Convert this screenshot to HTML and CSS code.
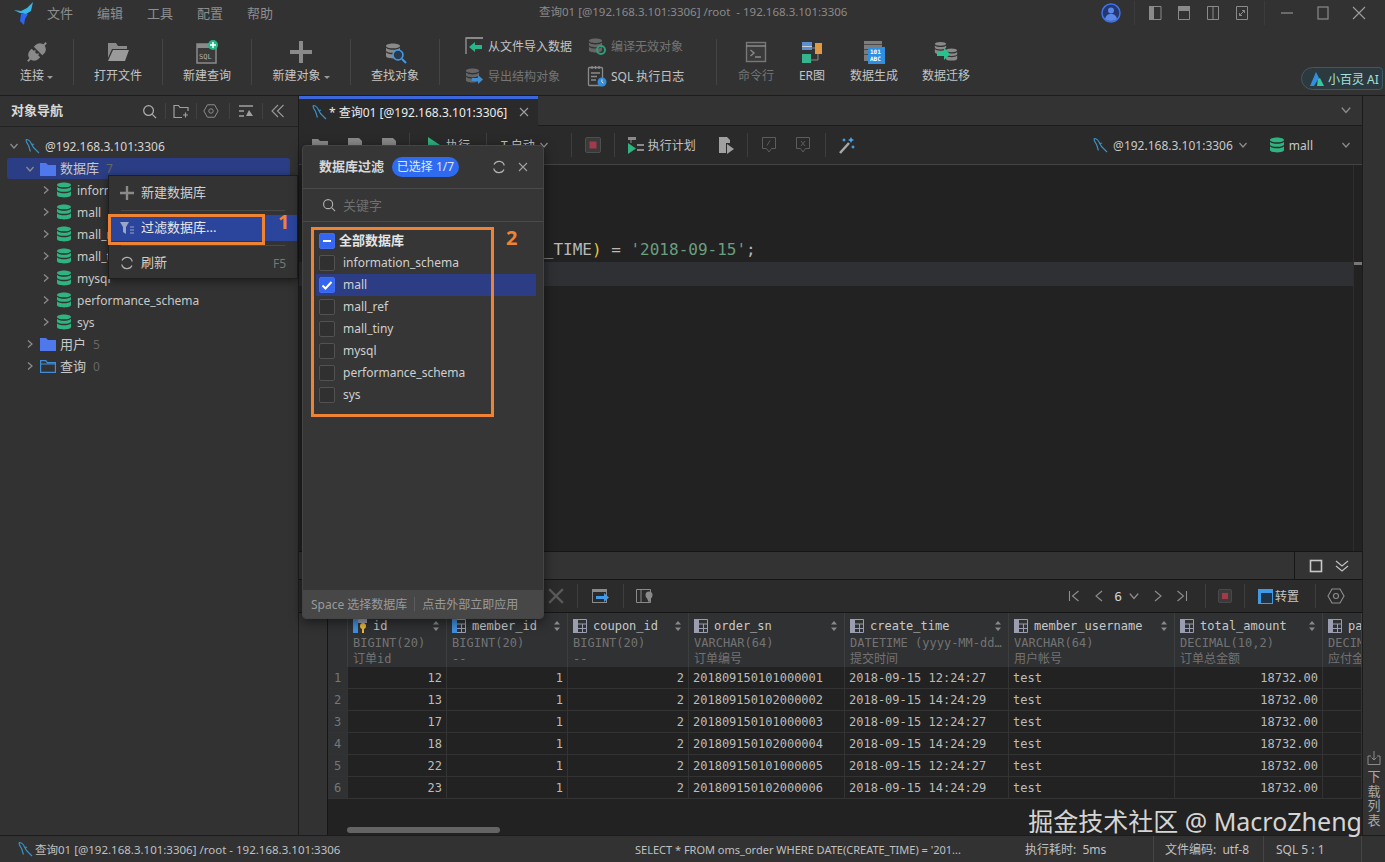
FILE: index.html

```html
<!DOCTYPE html>
<html lang="zh-CN">
<head>
  <meta charset="UTF-8">
  <title>Navicat</title>
  <link rel="stylesheet" href="styles.css">
</head>
<body>

  <!-- shared icons -->
  <svg class="defs">
    <symbol id="db" viewBox="0 0 16 16"><path fill="currentColor" d="M8 .5c3.9 0 7 1 7 2.4S11.900 5.300 8 5.300 1 4.300 1 2.900 4.100.5 8 .5zM1 4.800C2.200 6.200 5 6.800 8 6.800s5.800-.6 7-2v2.600c0 1.400-3.100 2.400-7 2.400S1 8.800 1 7.400zM1 9.300c1.200 1.400 4 2 7 2s5.800-.6 7-2v3.800c0 1.400-3.100 2.400-7 2.400s-7-1-7-2.400z"/></symbol>
    <symbol id="dolphin" viewBox="0 0 16 16"><path fill="none" stroke="#3d8fc4" stroke-width="1.200" d="M1 1.500c3 0 4.500 2 5.500 4.500s3 5 5 6.500l2.500 2.500M1 1.500c0 3 1.500 4 2.500 6s1 4 2 6M6.500 6c1 .3 2 .3 2.500 0"/></symbol>
    <symbol id="folder" viewBox="0 0 16 14"><path fill="#4f78ec" d="M0 1h6l2 2h8v11H0z"/></symbol>
    <symbol id="folder-line" viewBox="0 0 16 14"><path fill="none" stroke="#3f8fd8" stroke-width="1.200" d="M.6 1.600h5.200l1.500 2h8.100v9.800H.6zM.6 5h14.800"/></symbol>
    <symbol id="chev-r" viewBox="0 0 10 10"><path fill="none" stroke="#8e8e8e" stroke-width="1.200" d="M3 1.500 7 5 3 8.500"/></symbol>
    <symbol id="chev-d" viewBox="0 0 10 10"><path fill="none" stroke="#8e8e8e" stroke-width="1.200" d="M1.500 3 5 7l3.500-4"/></symbol>
    <symbol id="close" viewBox="0 0 10 10"><path fill="none" stroke="#a0a0a0" stroke-width="1.100" d="M1 1l8 8M9 1 1 9"/></symbol>
    <symbol id="search" viewBox="0 0 16 16"><circle cx="7" cy="7" r="5.200" fill="none" stroke="#b0b0b0" stroke-width="1.300"/><path stroke="#b0b0b0" stroke-width="1.300" d="m11 11 4 4"/></symbol>
    <symbol id="stop" viewBox="0 0 16 16"><rect x=".5" y=".5" width="15" height="15" rx="1.500" fill="#3a3a3a" stroke="#4e4e4e"/><rect x="4.500" y="4.500" width="7" height="7" fill="#a23a4a"/></symbol>
    <symbol id="hex" viewBox="0 0 18 18"><path fill="none" stroke="#8e8e8e" stroke-width="1.100" d="M5 2h8l4 7-4 7H5L1 9z"/><circle cx="9" cy="9" r="2.500" fill="none" stroke="#8e8e8e" stroke-width="1.100"/></symbol>
    <symbol id="col" viewBox="0 0 14 14"><path fill="#9a9eb0" d="M0 0h5v14H0z"/><path fill="none" stroke="#9a9eb0" d="M5 .5h8.500v13H5M5 5h8.500M9.500 5v8.500M5 9.500h8.500"/></symbol>
    <symbol id="sort" viewBox="0 0 8 10"><path fill="#8a8a8a" d="M4 0l3 3.500H1zM4 10 1 6.500h6z"/></symbol>
    <symbol id="refresh" viewBox="0 0 14 14"><path fill="none" stroke="#b0b0b0" stroke-width="1.200" d="M2 4.500A5.500 5.500 0 0 1 12.300 5.500M12 9.500A5.500 5.500 0 0 1 1.700 8.500"/></symbol>
  </svg>

  <div class="titlebar">
    <svg class="logo" width="22" height="24" viewBox="0 0 22 24"><path fill="#36b6e6" d="M1 9l7 1 6-3 6-6-2 9-5 3-6-1z"/><path fill="#2b66f0" d="M8 13l7 0-3 5-1 6-4-4z"/></svg>
    <nav class="menu"><span>文件</span><span>编辑</span><span>工具</span><span>配置</span><span>帮助</span></nav>
    <div class="win-title">查询01 [@192.168.3.101:3306] /root&nbsp; - 192.168.3.101:3306</div>
    <div class="win-right">
      <svg width="20" height="20" viewBox="0 0 20 20"><circle cx="10" cy="10" r="9" fill="#24386f" stroke="#3f72ea" stroke-width="1.500"/><circle cx="10" cy="7.500" r="3" fill="#5a86e8"/><path fill="#5a86e8" d="M4 16c1-4 3-5 6-5s5 1 6 5c-3 2.500-9 2.500-12 0z"/></svg>
      <i class="vline ml13"></i>
      <svg class="ml10" width="20" height="16" viewBox="0 0 16 16"><path fill="#8a8a8a" d="M2 1h5v14H2z"/><path fill="none" stroke="#8a8a8a" d="M7 1.500h7v13H7"/></svg>
      <svg class="ml9" width="20" height="16" viewBox="0 0 16 16"><path fill="#8a8a8a" d="M2 1h12v5H2z"/><path fill="none" stroke="#8a8a8a" d="M2.500 6v8.500h11V6"/></svg>
      <svg class="ml9" width="20" height="16" viewBox="0 0 16 16"><path fill="none" stroke="#8a8a8a" d="M2.500 1.500h11v13h-11zM8 1.500v13"/></svg>
      <svg class="ml9" width="20" height="16" viewBox="0 0 16 16"><path fill="none" stroke="#8a8a8a" d="M2.500 1.500h11v13h-11zM5.500 10.500l5-5M8 5.500h2.500V8M5.500 8v2.500H8"/></svg>
      <i class="vline ml12"></i>
      <svg class="ml15" width="14" height="14" viewBox="0 0 14 14"><path stroke="#8a8a8a" stroke-width="1.300" d="M1 7h12"/></svg>
      <svg class="ml22" width="14" height="14" viewBox="0 0 14 14"><rect x="2" y="1" width="10" height="12" fill="none" stroke="#8a8a8a" stroke-width="1.200"/></svg>
      <svg class="ml22" width="14" height="14" viewBox="0 0 14 14"><path stroke="#9a9a9a" stroke-width="1.200" d="M1 1l12 12M13 1 1 13"/></svg>
    </div>
  </div>

  <div class="toolbar">
    <div class="tool w73">
      <svg width="24" height="24" viewBox="0 0 24 24"><g transform="rotate(-45 12 12)" fill="#8a8a8a"><path d="M10.500 6H8a6 6 0 0 0 0 12h2.500z"/><path d="M13.500 6H16a6 6 0 0 1 0 12h-2.500z"/><path d="M-1 11h4v2h-4zM21 11h4v2h-4zM9 9h3v1.500H9zM9 13.500h3V15H9z"/></g></svg>
      <span class="tool-label">连接<i class="caret"></i></span>
    </div>
    <i class="tsep"></i>
    <div class="tool w88">
      <svg width="24" height="24" viewBox="0 0 24 24"><path fill="#8a8a8a" d="M2 3h8l2 3h9v3H6l-4 9z"/><path fill="#9a9a9a" d="M7 10h16l-4 11H2z"/></svg>
      <span class="tool-label">打开文件</span>
    </div>
    <i class="tsep"></i>
    <div class="tool w88">
      <svg width="24" height="24" viewBox="0 0 24 24"><rect x="2" y="4" width="19" height="19" fill="#3a3a3a" stroke="#8a8a8a" stroke-width="1.500"/><path fill="#8a8a8a" d="M2 4h19v4H2z"/><text x="4" y="19" class="svg-sql">SQL</text><circle cx="18" cy="5" r="5" fill="#27b58a"/><path stroke="#fff" stroke-width="1.500" d="M18 2v6M15 5h6"/></svg>
      <span class="tool-label">新建查询</span>
    </div>
    <i class="tsep"></i>
    <div class="tool w98">
      <svg width="24" height="24" viewBox="0 0 24 24"><path fill="#8a8a8a" d="M10 1h4v9h9v4h-9v9h-4v-9H1v-4h9z"/></svg>
      <span class="tool-label">新建对象<i class="caret"></i></span>
    </div>
    <i class="tsep"></i>
    <div class="tool w88">
      <svg width="24" height="24" viewBox="0 0 24 24"><use href="#db" x="2" y="1" width="16" height="20" class="c-gray"/><circle cx="15" cy="15" r="5" fill="#2b3a4a" stroke="#3f9ae8" stroke-width="1.600"/><path stroke="#3f9ae8" stroke-width="2" d="m19 19 4 4"/></svg>
      <span class="tool-label">查找对象</span>
    </div>
    <i class="tsep"></i>
    <div class="tool-grid">
      <div class="mini">
        <svg width="20" height="20" viewBox="0 0 20 20"><path fill="none" stroke="#8a8a8a" stroke-width="1.500" d="M2 18V2h16"/><path fill="#8a8a8a" d="M2 1h17v2H2z"/><path fill="#27b58a" d="M5 11l6-5v3h7v4h-7v3z"/></svg>
        <span>从文件导入数据</span>
      </div>
      <div class="mini dim">
        <svg width="20" height="20" viewBox="0 0 20 20"><use href="#db" x="1" y="0" width="15" height="19" class="c-dim"/><circle cx="14" cy="14" r="4" fill="none" stroke="#2f9e78" stroke-width="2"/></svg>
        <span>编译无效对象</span>
      </div>
      <div class="mini dim">
        <svg width="20" height="20" viewBox="0 0 20 20"><use href="#db" x="1" y="0" width="15" height="19" class="c-dim"/><path fill="#3f8ed0" d="M8 12h6V9l5 4.500-5 4.500v-3H8z"/></svg>
        <span>导出结构对象</span>
      </div>
      <div class="mini">
        <svg width="20" height="22" viewBox="0 0 20 22"><rect x="1.500" y="2.500" width="14" height="18" rx="1" fill="none" stroke="#8a8a8a" stroke-width="1.300"/><path stroke="#8a8a8a" stroke-width="1.300" d="M5 1v3M8.500 1v3M12 1v3M4 8h9M4 11.500h6M4 15h5"/><circle cx="15" cy="17" r="4.500" fill="#2f8fe0"/><path stroke="#fff" d="M15 14.500V17l1.500 1"/></svg>
        <span>SQL 执行日志</span>
      </div>
    </div>
    <i class="tsep"></i>
    <div class="tool w78 dim">
      <svg width="24" height="24" viewBox="0 0 24 24"><rect x="2.500" y="2.500" width="19" height="19" fill="#3a3a3a" stroke="#777" stroke-width="1.400"/><path fill="none" stroke="#8a8a8a" stroke-width="1.400" d="M2 6h20M6.500 10l3.500 3-3.500 3M11 17h6"/></svg>
      <span class="tool-label">命令行</span>
    </div>
    <div class="tool w34">
      <svg width="24" height="24" viewBox="0 0 24 24"><path fill="none" stroke="#8a8a8a" d="M9 8h6M18 14v6H10"/><path fill="#5a8fd0" d="M2 2h10v8H2z"/><path fill="#c8cdd6" d="M2 6h10v1H2z"/><path fill="#e09a44" d="M15 3h7v11h-7z"/><path fill="#35b58e" d="M2 14h9v9H2z"/></svg>
      <span class="tool-label">ER图</span>
    </div>
    <div class="tool w90">
      <svg width="24" height="24" viewBox="0 0 24 24"><path fill="#7c7c7c" d="M2 1h18v20H2z"/><path fill="#4a4a4a" d="M2 4h18v1H2zM2 9h18v1H2zM2 14h18v1H2z"/><path fill="#2f8fe0" d="M6 7h17v17H6z"/><text x="8" y="14" class="svg-bits">101</text><text x="8" y="21" class="svg-bits">ABC</text></svg>
      <span class="tool-label">数据生成</span>
    </div>
    <div class="tool w54">
      <svg width="26" height="24" viewBox="0 0 26 24"><use href="#db" x="1" y="0" width="13" height="16" class="c-gray"/><use href="#db" x="12" y="6" width="13" height="17" class="c-gray"/><path fill="#27c28f" d="M4 12h7V8l6 6-6 6v-4H4z"/></svg>
      <span class="tool-label">数据迁移</span>
    </div>
    <div class="ai-btn">
      <svg width="16" height="16" viewBox="0 0 16 16"><path fill="#2f8fe0" d="M7 1l3 6-5 8H1z"/><path fill="#35c6a0" d="M9 8l2-1 4 8H8z"/></svg>
      <span>小百灵 AI</span>
    </div>
  </div>

  <div class="main">
    <aside class="sidebar">
      <div class="side-head">
        <b>对象导航</b>
        <svg class="ml79" width="15" height="15"><use href="#search"/></svg>
        <i class="vline-s ml8"></i>
        <svg class="ml7" width="16" height="15" viewBox="0 0 16 15"><path fill="none" stroke="#a0a0a0" stroke-width="1.200" d="M15 7V3.500H7L5.500 1.500H1v12h8M10 11h5M12.500 8.500v5"/></svg>
        <i class="vline-s ml7"></i>
        <svg class="ml6" width="16" height="16"><use href="#hex" width="16" height="16"/></svg>
        <i class="vline-s ml10"></i>
        <svg class="ml8" width="16" height="14" viewBox="0 0 16 14"><path stroke="#a0a0a0" stroke-width="1.300" d="M1 2h14M1 7h5M1 12h5"/><path fill="#a0a0a0" d="M11 6l4 6H8z"/></svg>
        <i class="vline-s ml8"></i>
        <svg class="ml8" width="14" height="14" viewBox="0 0 14 14"><path fill="none" stroke="#9a9a9a" stroke-width="1.100" d="M7 1 1 7l6 6M12.500 1l-6 6 6 6"/></svg>
      </div>
      <div class="tree">
        <div class="node lvl0"><svg class="chev"><use href="#chev-d"/></svg><svg class="ico-dolphin"><use href="#dolphin"/></svg><span class="name strong">@192.168.3.101:3306</span></div>
        <div class="node lvl1 selected"><svg class="chev"><use href="#chev-d"/></svg><svg class="ico-folder"><use href="#folder"/></svg><span class="name zh">数据库</span><span class="count">7</span></div>
        <div class="node lvl2"><svg class="chev"><use href="#chev-r"/></svg><svg class="ico-db"><use href="#db"/></svg><span class="name">information_schema</span></div>
        <div class="node lvl2"><svg class="chev"><use href="#chev-r"/></svg><svg class="ico-db"><use href="#db"/></svg><span class="name">mall</span></div>
        <div class="node lvl2"><svg class="chev"><use href="#chev-r"/></svg><svg class="ico-db"><use href="#db"/></svg><span class="name">mall_ref</span></div>
        <div class="node lvl2"><svg class="chev"><use href="#chev-r"/></svg><svg class="ico-db"><use href="#db"/></svg><span class="name">mall_tiny</span></div>
        <div class="node lvl2"><svg class="chev"><use href="#chev-r"/></svg><svg class="ico-db"><use href="#db"/></svg><span class="name">mysql</span></div>
        <div class="node lvl2"><svg class="chev"><use href="#chev-r"/></svg><svg class="ico-db"><use href="#db"/></svg><span class="name">performance_schema</span></div>
        <div class="node lvl2"><svg class="chev"><use href="#chev-r"/></svg><svg class="ico-db"><use href="#db"/></svg><span class="name">sys</span></div>
        <div class="node lvl1"><svg class="chev"><use href="#chev-r"/></svg><svg class="ico-folder"><use href="#folder"/></svg><span class="name zh">用户</span><span class="count">5</span></div>
        <div class="node lvl1"><svg class="chev"><use href="#chev-r"/></svg><svg class="ico-folder"><use href="#folder-line"/></svg><span class="name zh">查询</span><span class="count">0</span></div>
      </div>
    </aside>

    <section class="content">
      <div class="tabs">
        <div class="tab">
          <svg class="ico-dolphin"><use href="#dolphin"/></svg>
          <span>* 查询01 [@192.168.3.101:3306]</span>
          <svg class="tab-x"><use href="#close"/></svg>
        </div>
        <svg class="tabs-more"><use href="#chev-d" width="12" height="12"/></svg>
      </div>

      <div class="qbar">
        <svg class="ml13" width="16" height="14" viewBox="0 0 16 14"><path fill="#8a8a8a" d="M0 1h6l2 2h8v11H0z"/></svg>
        <svg class="ml19" width="16" height="16" viewBox="0 0 16 16"><path fill="#8a8a8a" d="M1 1h11l3 3v11H1z"/></svg>
        <svg class="ml18" width="16" height="16" viewBox="0 0 16 16"><path fill="#8a8a8a" d="M1 1h11l3 3v11H1z"/></svg>
        <i class="qsep ml12"></i>
        <svg class="ml18" width="12" height="16" viewBox="0 0 12 16"><path fill="#2fb380" d="M0 0l12 8-12 8z"/></svg>
        <span class="qtext ml6">执行</span>
        <i class="qsep ml16"></i>
        <span class="qtext ml14">T 自动</span>
        <svg class="ml4" width="10" height="10"><use href="#chev-d"/></svg>
        <i class="qsep ml22"></i>
        <svg class="ml13" width="16" height="16"><use href="#stop"/></svg>
        <i class="qsep ml13"></i>
        <svg class="ml12" width="18" height="18" viewBox="0 0 18 18"><path fill="#8a8a8a" d="M1 1h8v3H1zM10 8h7v2h-7zM10 13h7v2h-7z"/><path stroke="#8a8a8a" d="M4 4v3"/><path fill="#2fb380" d="M1 7l8 5.500L1 18z"/></svg>
        <span class="qtext ml3">执行计划</span>
        <svg class="ml22" width="16" height="18" viewBox="0 0 16 18"><path fill="#a0a0a0" d="M1 1h8l3 3v3l3 0v0H8v10H1z"/><path fill="#a0a0a0" d="M9 8l7 5-7 5z"/></svg>
        <i class="qsep ml13"></i>
        <svg class="ml13" width="16" height="18" viewBox="0 0 16 18"><path fill="none" stroke="#5c5c5c" d="M1.500 1.500h13v11h-4L8 16l-2.500-3.500h-4zM6 9.500l3-5"/></svg>
        <svg class="ml18" width="16" height="18" viewBox="0 0 16 18"><path fill="none" stroke="#5c5c5c" d="M1.500 1.500h13v11h-4L8 16l-2.500-3.500h-4zM6 5l4 5M10 5l-4 5"/></svg>
        <i class="qsep ml14"></i>
        <svg class="ml12" width="18" height="18" viewBox="0 0 18 18"><path stroke="#a8a8a8" stroke-width="2.500" d="M2 17l9-10"/><path fill="#4aa8ee" d="M13 1l1 2 2 1-2 1-1 2-1-2-2-1 2-1zM6 2l.7 1.300L8 4l-1.300.7L6 6l-.7-1.300L4 4l1.300-.7zM15 9l.7 1.300L17 11l-1.300.7L15 13l-.7-1.300L13 11l1.300-.7z"/></svg>
        <div class="qright">
          <svg class="ico-dolphin"><use href="#dolphin"/></svg>
          <span class="qconn">@192.168.3.101:3306</span>
          <svg width="10" height="10"><use href="#chev-d"/></svg>
          <svg class="ico-db ml21"><use href="#db"/></svg>
          <span class="qconn ml9">mall</span>
          <svg class="ml23" width="10" height="10"><use href="#chev-d"/></svg>
        </div>
      </div>

      <div class="editor">
        <pre class="code"><span class="line">SELECT *</span><span class="line">FROM</span><span class="line">oms_order</span><span class="line">WHERE DATE(CREATE_TIME<span class="paren">)</span> = <span class="str">'2018-09-15'</span>;</span><span class="line current"></span></pre>
        <div class="ruler"><i class="ruler-mark"></i></div>
      </div>

      <div class="panel-tabs">
        <div class="panel-btns">
          <svg width="14" height="14" viewBox="0 0 14 14"><rect x="1.500" y="1.500" width="11" height="11" fill="none" stroke="#c8c8c8" stroke-width="1.600"/></svg>
          <svg class="ml12" width="14" height="14" viewBox="0 0 14 14"><path fill="none" stroke="#c0c0c0" stroke-width="1.200" d="M1 2l6 5 6-5M1 7l6 5 6-5"/></svg>
        </div>
      </div>

      <div class="rbar">
        <svg class="ml249" width="16" height="16" viewBox="0 0 14 14"><path stroke="#5a5a5a" stroke-width="2" d="M1 1l12 12M13 1 1 13"/></svg>
        <i class="qsep ml13"></i>
        <svg class="ml14" width="18" height="16" viewBox="0 0 18 16"><rect x=".5" y="1.500" width="14" height="13" fill="none" stroke="#8a8a8a"/><path fill="#8a8a8a" d="M0 1h15v3H0z"/><path fill="#3f9ae8" d="M4 8h8V5l5 4.500-5 4.500v-3H4z"/></svg>
        <i class="qsep ml13"></i>
        <svg class="ml12" width="18" height="16" viewBox="0 0 18 16"><path fill="none" stroke="#8a8a8a" d="M.5 1.500h14v13H.5zM5 1.500v13"/><circle cx="13" cy="7" r="3.500" fill="#8a8a8a"/><path fill="#8a8a8a" d="M10 8l3 7 3-7z"/></svg>
        <div class="rright">
          <svg width="12" height="12" viewBox="0 0 12 12"><path fill="none" stroke="#8e8e8e" stroke-width="1.100" d="M1.500 1v10M10.500 1l-6 5 6 5"/></svg>
          <svg class="ml13" width="12" height="12" viewBox="0 0 12 12"><path fill="none" stroke="#8e8e8e" stroke-width="1.100" d="M9 1 3 6l6 5"/></svg>
          <span class="pagenum">6</span>
          <svg class="ml6" width="12" height="12"><use href="#chev-d" width="12" height="12"/></svg>
          <svg class="ml12" width="12" height="12" viewBox="0 0 12 12"><path fill="none" stroke="#8e8e8e" stroke-width="1.100" d="M3 1l6 5-6 5"/></svg>
          <svg class="ml12" width="12" height="12" viewBox="0 0 12 12"><path fill="none" stroke="#8e8e8e" stroke-width="1.100" d="M1.500 1l6 5-6 5M10.500 1v10"/></svg>
          <i class="qsep ml17"></i>
          <svg class="ml12" width="14" height="14"><use href="#stop" width="14" height="14"/></svg>
          <i class="qsep ml12"></i>
          <svg class="ml13" width="15" height="15" viewBox="0 0 15 15"><path fill="#3f9ae8" d="M0 0h15v15H0z"/><path fill="#1f3346" d="M3 4h11v10H3z"/></svg>
          <span class="qtext ml2">转置</span>
          <i class="qsep ml16"></i>
          <svg class="ml11" width="18" height="18"><use href="#hex"/></svg>
        </div>
      </div>

      <div class="results">
        <table class="grid">
          <colgroup><col class="c0"><col class="c1"><col class="c2"><col class="c2"><col class="c3"><col class="c4"><col class="c5"><col class="c6"><col class="c7"></colgroup>
          <thead>
            <tr>
              <th></th>
              <th><div class="h1"><svg class="key" width="14" height="14" viewBox="0 0 14 14"><path fill="#3f8fe0" d="M0 0h5v14H0z"/><path fill="#9a9eb0" d="M5 0h9v4H5z"/><circle cx="10" cy="7" r="3" fill="#e8b93a"/><path stroke="#e8b93a" stroke-width="2" d="M10 9v5"/></svg><span>id</span><svg class="sort"><use href="#sort"/></svg></div><div class="h2">BIGINT(20)</div><div class="h3">订单id</div></th>
              <th><div class="h1"><svg class="key" width="14" height="14" viewBox="0 0 14 14"><use href="#col"/><path fill="#3f8fe0" d="M0 0h5v14H0z"/></svg><span>member_id</span><svg class="sort"><use href="#sort"/></svg></div><div class="h2">BIGINT(20)</div><div class="h3">--</div></th>
              <th><div class="h1"><svg class="key"><use href="#col"/></svg><span>coupon_id</span><svg class="sort"><use href="#sort"/></svg></div><div class="h2">BIGINT(20)</div><div class="h3">--</div></th>
              <th><div class="h1"><svg class="key"><use href="#col"/></svg><span>order_sn</span><svg class="sort"><use href="#sort"/></svg></div><div class="h2">VARCHAR(64)</div><div class="h3">订单编号</div></th>
              <th><div class="h1"><svg class="key"><use href="#col"/></svg><span>create_time</span><svg class="sort"><use href="#sort"/></svg></div><div class="h2">DATETIME (yyyy-MM-dd…</div><div class="h3">提交时间</div></th>
              <th><div class="h1"><svg class="key"><use href="#col"/></svg><span>member_username</span><svg class="sort"><use href="#sort"/></svg></div><div class="h2">VARCHAR(64)</div><div class="h3">用户帐号</div></th>
              <th><div class="h1"><svg class="key"><use href="#col"/></svg><span>total_amount</span><svg class="sort"><use href="#sort"/></svg></div><div class="h2">DECIMAL(10,2)</div><div class="h3">订单总金额</div></th>
              <th><div class="h1"><svg class="key"><use href="#col"/></svg><span>pay_amount</span></div><div class="h2">DECIMAL(10,2)</div><div class="h3">应付金额</div></th>
            </tr>
          </thead>
          <tbody>
            <tr><td class="num">1</td><td class="r">12</td><td class="r">1</td><td class="r">2</td><td>201809150101000001</td><td>2018-09-15 12:24:27</td><td>test</td><td class="r">18732.00</td><td></td></tr>
            <tr><td class="num">2</td><td class="r">13</td><td class="r">1</td><td class="r">2</td><td>201809150102000002</td><td>2018-09-15 14:24:29</td><td>test</td><td class="r">18732.00</td><td></td></tr>
            <tr><td class="num">3</td><td class="r">17</td><td class="r">1</td><td class="r">2</td><td>201809150101000003</td><td>2018-09-15 12:24:27</td><td>test</td><td class="r">18732.00</td><td></td></tr>
            <tr><td class="num">4</td><td class="r">18</td><td class="r">1</td><td class="r">2</td><td>201809150102000004</td><td>2018-09-15 14:24:29</td><td>test</td><td class="r">18732.00</td><td></td></tr>
            <tr><td class="num">5</td><td class="r">22</td><td class="r">1</td><td class="r">2</td><td>201809150101000005</td><td>2018-09-15 12:24:27</td><td>test</td><td class="r">18732.00</td><td></td></tr>
            <tr><td class="num">6</td><td class="r">23</td><td class="r">1</td><td class="r">2</td><td>201809150102000006</td><td>2018-09-15 14:24:29</td><td>test</td><td class="r">18732.00</td><td></td></tr>
          </tbody>
        </table>
        <div class="hscroll"><i class="thumb"></i></div>
      </div>
    </section>

    <aside class="rail">
      <svg width="14" height="16" viewBox="0 0 14 16"><path fill="none" stroke="#8a8a8a" d="M4 6H1v8.500h12V6h-3M7 1v9M4.500 7.500 7 10l2.500-2.500"/></svg>
      <div class="rail-text">下载列表</div>
    </aside>
  </div>

  <div class="status">
    <svg class="ico-dolphin ml18"><use href="#dolphin"/></svg>
    <span class="st-conn">查询01 [@192.168.3.101:3306] /root - 192.168.3.101:3306</span>
    <span class="st-sql">SELECT * FROM oms_order WHERE DATE(CREATE_TIME) = '201...</span>
    <span class="st-time">执行耗时:&nbsp; 5ms</span>
    <i class="st-sep"></i>
    <span class="st-enc">文件编码:&nbsp; utf-8</span>
    <i class="st-sep"></i>
    <span class="st-pos">SQL 5 : 1</span>
    <i class="st-sep st-last"></i>
  </div>

  <!-- floating layers -->
  <div class="ctx-menu">
    <div class="ctx-item"><svg width="14" height="14" viewBox="0 0 14 14"><path fill="#8a8a8a" d="M5.800 0h2.400v5.800H14v2.400H8.200V14H5.800V8.200H0V5.800h5.800z"/></svg><span>新建数据库</span></div>
    <i class="ctx-sep"></i>
    <div class="ctx-item active"><svg width="14" height="14" viewBox="0 0 14 14"><path fill="#9aa6c8" d="M0 1h9L6 6v7L3 11V6z"/><path stroke="#9aa6c8" d="M10 6h4M10 9h4M10 12h4"/></svg><span>过滤数据库...</span></div>
    <i class="ctx-sep"></i>
    <div class="ctx-item"><svg width="14" height="14"><use href="#refresh"/></svg><span>刷新</span><em>F5</em></div>
  </div>
  <div class="mark mark-menu"></div>
  <div class="mark-num num-1">1</div>

  <div class="filter">
    <div class="filter-head">
      <b>数据库过滤</b>
      <span class="badge">已选择 1/7</span>
      <svg class="filter-refresh" width="14" height="14"><use href="#refresh"/></svg>
      <svg class="filter-close" width="10" height="10"><use href="#close"/></svg>
    </div>
    <div class="filter-search"><svg width="14" height="14"><use href="#search" width="14" height="14"/></svg><span>关键字</span></div>
    <div class="filter-list">
      <div class="opt all"><i class="box on"><i class="dash"></i></i><b>全部数据库</b></div>
      <div class="opt"><i class="box"></i><span>information_schema</span></div>
      <div class="opt sel"><i class="box on"><svg width="12" height="12" viewBox="0 0 12 12"><path fill="none" stroke="#fff" stroke-width="2" d="M1.500 6.500 4.500 9.500 10.500 3"/></svg></i><span>mall</span></div>
      <div class="opt"><i class="box"></i><span>mall_ref</span></div>
      <div class="opt"><i class="box"></i><span>mall_tiny</span></div>
      <div class="opt"><i class="box"></i><span>mysql</span></div>
      <div class="opt"><i class="box"></i><span>performance_schema</span></div>
      <div class="opt"><i class="box"></i><span>sys</span></div>
    </div>
    <div class="filter-foot"><span>Space 选择数据库</span><i></i><span>点击外部立即应用</span></div>
  </div>
  <div class="mark mark-list"></div>
  <div class="mark-num num-2">2</div>

  <div class="watermark">掘金技术社区 @ MacroZheng</div>

</body>
</html>
```

FILE: styles.css

```css
* { box-sizing: border-box; }
html, body { height: 100%; }
body {
  margin: 0;
  height: 862px;
  position: relative;
  overflow: hidden;
  display: flex;
  flex-direction: column;
  background: #323232;
  color: #c8c8c8;
  font: 12px "Noto Sans", "Noto Sans CJK SC", sans-serif;
}
i, em { font-style: normal; }
svg { flex: none; display: block; overflow: visible; }
.defs { position: absolute; width: 0; height: 0; }

/* spacing helpers */
.ml2 { margin-left: 2px; } .ml3 { margin-left: 3px; } .ml4 { margin-left: 4px; }
.ml6 { margin-left: 6px; } .ml7 { margin-left: 7px; } .ml8 { margin-left: 8px; }
.ml9 { margin-left: 9px; } .ml10 { margin-left: 10px; } .ml11 { margin-left: 11px; }
.ml12 { margin-left: 12px; } .ml13 { margin-left: 13px; } .ml14 { margin-left: 14px; }
.ml15 { margin-left: 15px; } .ml16 { margin-left: 16px; } .ml17 { margin-left: 17px; }
.ml18 { margin-left: 18px; } .ml19 { margin-left: 19px; } .ml20 { margin-left: 20px; }
.ml21 { margin-left: 21px; } .ml22 { margin-left: 22px; } .ml23 { margin-left: 23px; }
.ml79 { margin-left: 79px; } .ml249 { margin-left: 249px; }

.c-gray { color: #8a8a8a; }
.c-dim { color: #666; }
.svg-sql { font: 7px "DejaVu Sans Mono", monospace; fill: #b0b0b0; }
.svg-bits { font: bold 6px "DejaVu Sans Mono", monospace; fill: #fff; }

/* title bar */
.titlebar {
  height: 26px;
  flex: none;
  display: flex;
  align-items: center;
  position: relative;
  padding-left: 13px;
}
.menu { display: flex; gap: 24px; margin-left: 12px; padding-bottom: 2px; font-size: 13px; color: #8e8e8e; }
.win-title {
  position: absolute;
  left: 539px;
  top: 3px;
  font-size: 11.500px;
  color: #8a8a8a;
  white-space: nowrap;
}
.win-right { margin-left: auto; display: flex; align-items: center; padding-right: 19px; }
.vline { width: 1px; height: 24px; background: #3c3c3c; }

/* main toolbar */
.toolbar {
  height: 70px;
  flex: none;
  display: flex;
  padding-top: 12px;
  border-bottom: 1px solid #1c1c1c;
  position: relative;
}
.tool {
  display: flex;
  flex-direction: column;
  align-items: center;
  padding-top: 2px;
  gap: 3px;
}
.tool svg { height: 24px; }
.w34 { width: 34px; } .w54 { width: 54px; } .w73 { width: 73px; } .w78 { width: 78px; }
.w88 { width: 88px; } .w90 { width: 90px; } .w98 { width: 98px; }
.tool-label { line-height: 18px; color: #c4c4c4; white-space: nowrap; }
.dim .tool-label, .mini.dim span { color: #757575; }
.caret {
  display: inline-block;
  margin-left: 3px;
  vertical-align: 1px;
  border: 3px solid transparent;
  border-top: 3px solid #999;
  border-bottom: 0;
}
.tsep { width: 1px; height: 46px; margin-top: 1px; background: #444; flex: none; }
.tool-grid {
  width: 276px;
  height: 60px;
  margin-top: -7px;
  padding-left: 24px;
  display: grid;
  grid-template-columns: 123px 129px;
  grid-auto-rows: 30px;
}
.mini { display: flex; align-items: center; gap: 4px; color: #c4c4c4; white-space: nowrap; }
.ai-btn {
  position: absolute;
  right: 2px;
  top: 41px;
  width: 82px;
  height: 23px;
  display: flex;
  align-items: center;
  gap: 3px;
  padding-left: 7px;
  border: 1px solid #3d5a68;
  border-radius: 12px 4px 4px 12px;
  background: #2c3a40;
  color: #a8e0d8;
  white-space: nowrap;
}

/* body split */
.main { flex: 1; display: flex; min-height: 0; }
.sidebar { width: 299px; flex: none; border-right: 1px solid #1c1c1c; }
.side-head {
  height: 31px;
  display: flex;
  align-items: center;
  padding-left: 11px;
  border-bottom: 1px solid #222;
}
.side-head b { font-size: 13px; color: #d8d8d8; margin-top: -3px; }
.vline-s { width: 1px; height: 16px; background: #414141; }

.tree { padding-top: 8px; }
.node { height: 22px; display: flex; align-items: center; position: relative; font-size: 12px; }
.node .name { white-space: nowrap; }
.node .zh { font-size: 13px; margin-top: -2px; }
.chev { width: 10px; height: 10px; }
.ico-dolphin { width: 16px; height: 16px; }
.ico-folder { width: 16px; height: 14px; }
.ico-db { width: 16px; height: 16px; color: #2fb380; }
.lvl0 { padding-left: 9px; }
.lvl0 .ico-dolphin { margin-left: 6px; margin-right: 4px; }
.lvl1 { padding-left: 25px; }
.lvl1 .ico-folder { margin-left: 5px; margin-right: 4px; }
.lvl2 { padding-left: 41px; }
.lvl2 .ico-db { margin-left: 5px; margin-right: 5px; }
.strong { color: #d4d4d4; }
.count { margin-left: 7px; color: #666; }
.selected { margin: 1px 8px 0 7px; height: 21px; padding-left: 18px; background: #2b3e85; border-radius: 3px; }

/* editor side */
.content { flex: 1; min-width: 0; display: flex; flex-direction: column; }
.tabs {
  height: 30px;
  flex: none;
  display: flex;
  justify-content: space-between;
  background: #333;
  border-bottom: 1px solid #1c1c1c;
}
.tab {
  width: 239px;
  height: 30px;
  display: flex;
  align-items: center;
  padding: 0 0 2px 13px;
  border-top: 3px solid #3b66dc;
  background: #2a2a2a;
  color: #ececec;
  font-size: 12px;
  white-space: nowrap;
}
.tab span { margin-left: 1px; }
.tab-x { width: 10px; height: 10px; margin-left: 12px; }
.tabs-more { width: 12px; height: 12px; margin: 8px 10px 0 0; }

.qbar {
  height: 39px;
  flex: none;
  display: flex;
  align-items: center;
  background: #2a2a2a;
  border-bottom: 1px solid #444;
}
.qsep { width: 1px; height: 24px; background: #3e3e3e; flex: none; }
.qtext { color: #c4c4c4; white-space: nowrap; }
.qright { margin-left: auto; display: flex; align-items: center; padding-right: 11px; }
.qconn { color: #c8c8c8; margin: 0 5px 0 4px; white-space: nowrap; }

.editor { height: 386px; flex: none; display: flex; background: #222; }
.code {
  flex: 1;
  margin: 0;
  padding-top: 1px;
  font: 16px/24px "DejaVu Sans Mono", monospace;
  color: #b8b8b8;
  overflow: hidden;
}
.line { display: block; height: 24px; padding-left: 81px; }
.current { background: #2e3033; }
.paren { color: #e8c13a; }
.str { color: #6a9e80; }
.ruler { width: 9px; flex: none; border-left: 1px solid #2d2d2d; padding-top: 97px; }
.ruler-mark { display: block; height: 3px; background: #777; }

.panel-tabs {
  height: 29px;
  flex: none;
  display: flex;
  justify-content: flex-end;
  background: #333;
  border-top: 1px solid #161616;
  border-bottom: 1px solid #161616;
}
.panel-btns {
  width: 68px;
  display: flex;
  align-items: center;
  padding-left: 14px;
  border-left: 1px solid #161616;
}
.rbar {
  height: 33px;
  flex: none;
  display: flex;
  align-items: center;
  background: #2b2b2b;
  border-bottom: 1px solid #161616;
}
.rright { margin-left: auto; display: flex; align-items: center; padding-right: 17px; }
.pagenum { margin-left: 9px; color: #d0d0d0; font: 13px "DejaVu Sans Mono", monospace; }

.results {
  flex: 1;
  min-height: 0;
  display: flex;
  flex-direction: column;
  justify-content: space-between;
  margin-left: 28px;
  background: #222;
  border-left: 1px solid #161616;
}
.grid {
  table-layout: fixed;
  width: 1034px;
  border-collapse: separate;
  border-spacing: 0;
  font: 12px "DejaVu Sans Mono", "Noto Sans CJK SC", monospace;
}
.c0 { width: 20px; } .c1 { width: 99px; } .c2 { width: 121px; } .c3 { width: 156px; }
.c4 { width: 164px; } .c5 { width: 166px; } .c6 { width: 148px; } .c7 { width: 39px; }
.grid th {
  height: 54px;
  padding: 4px 0 0 5px;
  background: #2f3133;
  border-right: 1px solid #3c3e40;
  text-align: left;
  font-weight: normal;
  vertical-align: top;
  overflow: hidden;
  white-space: nowrap;
}
.h1 { height: 18px; display: flex; align-items: center; color: #c8c8c8; }
.h1 span { margin-left: 6px; }
.key { width: 14px; height: 14px; }
.sort { width: 8px; height: 10px; margin-left: auto; margin-right: 6px; }
.h2 { height: 17px; line-height: 17px; color: #737373; }
.h3 { height: 15px; line-height: 15px; color: #737373; }
.grid td {
  height: 22px;
  padding: 0 4px;
  color: #bcbcbc;
  border-right: 1px solid #333;
  border-bottom: 1px solid #333;
  white-space: nowrap;
  overflow: hidden;
}
.grid td.r { text-align: right; }
.grid td.num { background: #2f3133; color: #777; text-align: center; padding: 0; }
.hscroll { height: 8px; flex: none; padding-left: 19px; }
.thumb { display: block; width: 153px; height: 6px; border-radius: 3px; background: #646464; }

.rail {
  width: 23px;
  flex: none;
  border-left: 1px solid #1c1c1c;
  display: flex;
  flex-direction: column;
  align-items: center;
  justify-content: flex-end;
  padding-bottom: 7px;
}
.rail-text {
  margin-top: 4px;
  writing-mode: vertical-rl;
  font-size: 13px;
  letter-spacing: 1.500px;
  color: #a8a8a8;
}

/* status bar */
.status {
  height: 27px;
  flex: none;
  display: flex;
  align-items: center;
  border-top: 1px solid #1c1c1c;
  white-space: nowrap;
  color: #c0c0c0;
}
.st-conn { margin-left: 1px; width: 600px; font-size: 11.500px; }
.st-sql { width: 390px; font-size: 11px; }
.st-time { width: 128px; }
.st-sep { width: 1px; height: 26px; background: #444; flex: none; }
.st-enc { width: 109px; padding-left: 11px; }
.st-pos { width: 97px; padding-left: 12px; }

/* context menu */
.ctx-menu {
  position: absolute;
  left: 108px;
  top: 175px;
  width: 190px;
  height: 104px;
  padding-top: 4px;
  background: #333;
  border: 1px solid #1e1e1e;
  box-shadow: 0 2px 8px rgba(0, 0, 0, .45);
}
.ctx-item { height: 26px; display: flex; align-items: center; gap: 7px; padding-left: 11px; font-size: 13px; color: #d0d0d0; }
.ctx-item span { margin-top: -4px; }
.ctx-item em { margin-left: auto; margin-right: 11px; color: #777; font-size: 12px; }
.ctx-item.active { background: #2b459c; color: #e8e8e8; }
.ctx-sep { display: block; height: 1px; margin: 4px 12px; background: #484848; }

/* annotation marks */
.mark { position: absolute; border: 3px solid #ee8433; }
.mark-menu { left: 108px; top: 214px; width: 157px; height: 31px; }
.mark-list { left: 311px; top: 227px; width: 183px; height: 190px; }
.mark-num { position: absolute; color: #ee8433; font: bold 20px "Noto Sans", sans-serif; }
.num-1 { left: 278px; top: 208px; }
.num-2 { left: 506px; top: 224px; }

/* filter popup */
.filter {
  position: absolute;
  left: 302px;
  top: 145px;
  width: 242px;
  height: 474px;
  display: flex;
  flex-direction: column;
  background: #363636;
  border: 1px solid #444;
  border-radius: 4px;
  box-shadow: 0 3px 12px rgba(0, 0, 0, .5);
  overflow: hidden;
}
.filter-head {
  height: 43px;
  flex: none;
  display: flex;
  align-items: center;
  padding-left: 16px;
  border-bottom: 1px solid #4a4a4a;
}
.filter-head b { font-size: 13px; color: #d8d8d8; margin-top: -3px; }
.badge {
  margin-left: 8px;
  width: 67px;
  height: 20px;
  line-height: 19px;
  text-align: center;
  border-radius: 10px;
  background: #2f6bf0;
  color: #dfe8ff;
  white-space: nowrap;
}
.filter-refresh { margin-left: 33px; }
.filter-close { margin-left: 12px; }
.filter-search {
  height: 33px;
  flex: none;
  display: flex;
  align-items: center;
  gap: 7px;
  padding-left: 19px;
  font-size: 13px;
  color: #6e6e6e;
  border-bottom: 1px solid #4a4a4a;
}
.filter-search span { margin-top: -2px; }
.filter-list { flex: 1; padding: 8px 7px 0 13px; }
.opt { height: 22px; display: flex; align-items: center; gap: 8px; padding-left: 3px; font-size: 12px; color: #cfcfcf; }
.opt span { margin-top: -1px; }
.opt.all { gap: 4px; color: #e4e4e4; font-size: 13px; }
.opt.all b { margin-top: -4px; }
.opt.sel { background: #2c3d85; }
.box {
  width: 16px;
  height: 16px;
  flex: none;
  display: flex;
  align-items: center;
  justify-content: center;
  border: 1px solid #525252;
  border-radius: 2px;
  background: #303030;
}
.box.on { border-color: #3f6cf0; background: #3566f0; }
.dash { width: 8px; height: 2px; background: #fff; }
.filter-foot {
  height: 28px;
  flex: none;
  display: flex;
  align-items: center;
  padding-left: 8px;
  background: #474747;
  color: #9a9a9a;
  white-space: nowrap;
}
.filter-foot i { width: 1px; height: 14px; margin: 0 7px; background: #5c5c5c; }

.watermark {
  position: absolute;
  right: 23px;
  top: 804px;
  font: 25px/34px "Noto Sans", "Noto Sans CJK SC", sans-serif;
  color: rgba(255, 255, 255, .82);
  white-space: nowrap;
}
```
